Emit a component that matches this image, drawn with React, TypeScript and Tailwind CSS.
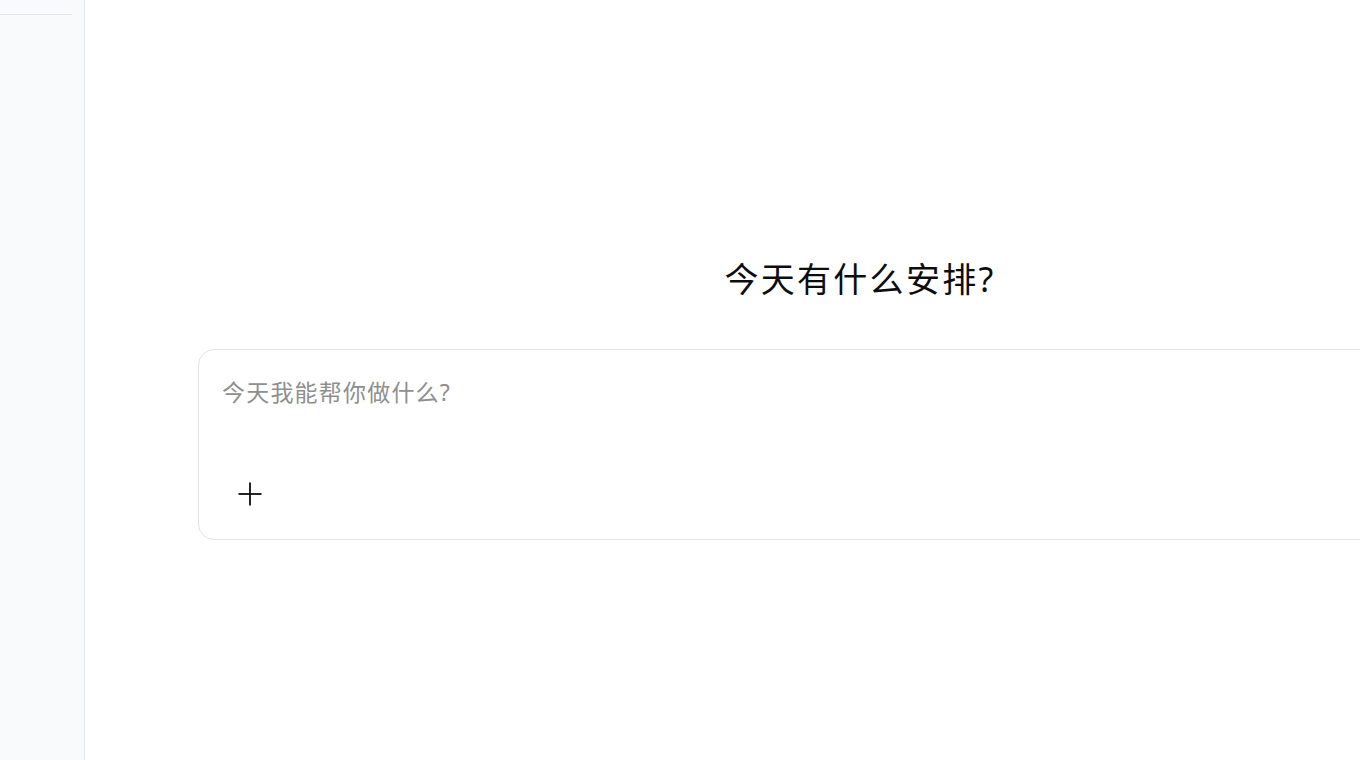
import React from 'react'

const PlusIcon: React.FC = () => (
    <svg width="26" height="26" viewBox="0 0 26 26" fill="none" stroke="#0d0d0d" strokeWidth="1.8" strokeLinecap="butt">
        <path d="M13 1.5v23" />
        <path d="M1.5 13h23" />
    </svg>
)

const App: React.FC = () => {
    return (
        <div
            className="flex h-screen w-screen overflow-hidden bg-white"
            style={{ fontFamily: '"Noto Sans", "Noto Sans CJK SC", sans-serif' }}
        >
            {/* sidebar */}
            <aside className="w-[85px] shrink-0 bg-[#f9fafb] border-r border-[#e5e7eb]">
                <div className="h-[14px]" />
                <div className="w-[72px] border-t border-[#e3e4e7]" />
            </aside>

            {/* main */}
            <main className="flex-1 min-w-0">
                <div className="ml-[113px] w-[1324px] shrink-0 pt-[258px]">
                    <h1 className="text-center text-[34px] leading-[42px] tracking-[2.3px] font-normal text-[#0d0d0d]">
                        今天有什么安排?
                    </h1>

                    <div className="mt-[49px] h-[191px] rounded-[16px] border border-[#e3e3e3] bg-white flex flex-col">
                        <div className="px-[23px] pt-[28px] text-[23px] leading-[28px] tracking-[1.2px] text-[#8f8f8f]">
                            今天我能帮你做什么?
                        </div>
                        <div className="mt-auto pb-[32px] pl-[38px]">
                            <button className="flex items-center justify-center">
                                <PlusIcon />
                            </button>
                        </div>
                    </div>
                </div>
            </main>
        </div>
    )
}

export default App
